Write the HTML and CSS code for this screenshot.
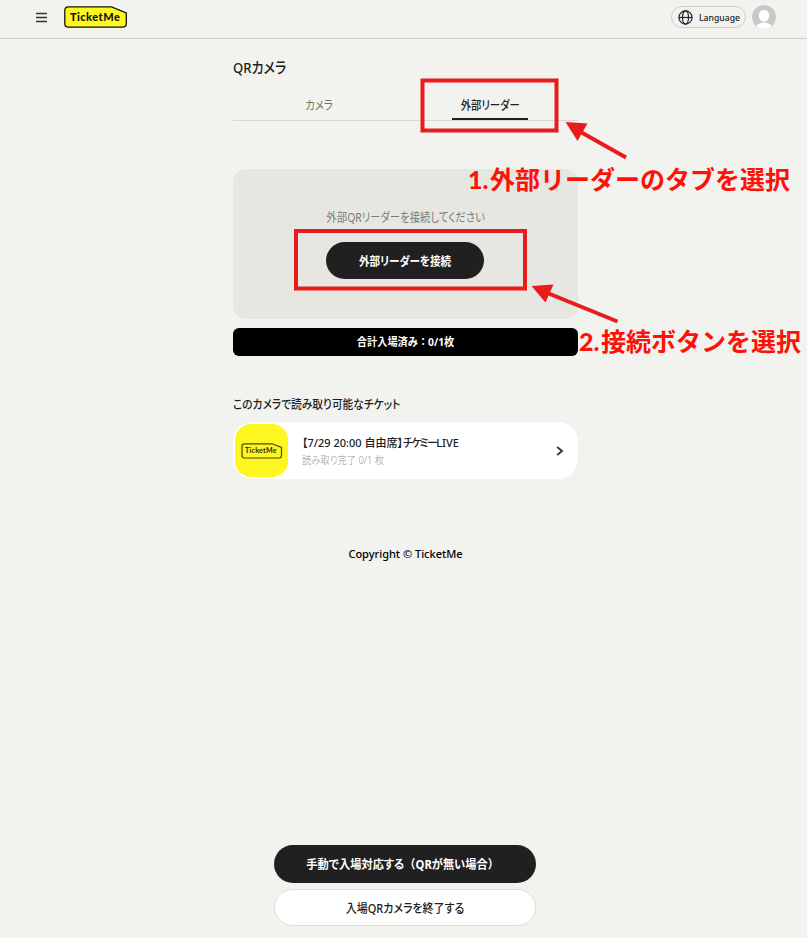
FILE: index.html
```
<!DOCTYPE html>
<html lang="ja">
<head>
<meta charset="utf-8">
<title>QRカメラ</title>
<link rel="stylesheet" href="styles.css">
</head>
<body>
<header class="header">
  <svg class="menu" width="12" height="11" viewBox="0 0 12 11"><path d="M0 1.500h11M0 5.500h11M0 9.500h11" stroke="#30313a" stroke-width="1.300"/></svg>
  <div class="logo">
    <svg width="64" height="22" viewBox="0 0 64 22"><path d="M4.500 .8H47.500L62.300 7V17.500Q62.300 21.200 58.500 21.200H4.500Q.8 21.200 .8 17.500V4.500Q.8 .8 4.500 .8Z" fill="#fdf620" stroke="#15150c" stroke-width="1.300"/></svg>
    <span class="logo-text">TicketMe</span>
  </div>
  <div class="language">
    <svg width="15" height="15" viewBox="0 0 15 15" fill="none" stroke="#1c2030" stroke-width="1.200"><circle cx="7.500" cy="7.500" r="6.600"/><ellipse cx="7.500" cy="7.500" rx="3" ry="6.600"/><path d="M1 7.500h13"/></svg>
    <span class="language-text">Language</span>
  </div>
  <svg class="avatar" width="24" height="24" viewBox="0 0 24 24"><defs><clipPath id="disc"><circle cx="12" cy="12" r="12"/></clipPath></defs><g clip-path="url(#disc)"><path fill="#c9c9c9" d="M0 0h24v24H0z"/><ellipse cx="12" cy="10.800" rx="5.200" ry="6" fill="#fff"/><path d="M3.500 24Q4.500 17.500 12 17.500T20.500 24Z" fill="#fff"/></g></svg>
</header>
<main class="main">
  <h1 class="title">QRカメラ</h1>
  <nav class="tabs">
    <div class="tab"><span class="tab-text">カメラ</span></div>
    <div class="tab tab-active"><div class="tab-reader"><span class="tab-text">外部リーダー</span></div></div>
  </nav>
  <section class="panel">
    <p class="panel-text">外部QRリーダーを接続してください</p>
    <button class="connect"><span>外部リーダーを接続</span></button>
  </section>
  <div class="total"><span>合計入場済み<span class="full">：</span>0/1枚</span></div>
  <h2 class="subtitle">このカメラで読み取り可能なチケット</h2>
  <article class="ticket">
    <div class="thumb">
      <svg width="42" height="16" viewBox="0 0 42 16"><path d="M3.500 .8H31L40.500 4.500V12.500Q40.500 15 38 15H3.500Q1 15 1 12.500V3.500Q1 .8 3.500 .8Z" fill="none" stroke="#4b4910" stroke-width="1.200"/></svg>
      <span class="thumb-text">TicketMe</span>
    </div>
    <div class="ticket-info">
      <div class="ticket-name">【7/29 20:00 自由席】<span class="ticket-kana">チケミー</span>LIVE</div>
      <div class="ticket-count">読み取り完了 0/1 枚</div>
    </div>
    <svg class="chevron" width="8" height="10" viewBox="0 0 8 10"><path d="M1.200 1L6 5L1.200 9" fill="none" stroke="#353535" stroke-width="1.900"/></svg>
  </article>
  <footer class="copyright">Copyright © TicketMe</footer>
</main>
<div class="actions">
  <button class="manual"><span>手動で入場対応する<span class="full">（</span>QRが無い場合<span class="full">）</span></span></button>
  <button class="finish"><span>入場QRカメラを終了する</span></button>
</div>
<svg class="marks" width="807" height="938" viewBox="0 0 807 938">
  <g fill="none" stroke="#e81c1c" stroke-width="4"><path d="M422.500 80.500H556.500V130.500H422.500Z"/><path d="M296 231H525V288.500H296Z"/><path d="M578 130.500L626 157.500M545 292L617.500 321.500"/></g>
  <path d="M565.500 122L587.500 123.500L577.500 141ZM531.500 286L553.500 284.500L545.500 302.500Z" fill="#e81c1c"/>
</svg>
<div class="note note-one"><span class="note-number">1.</span>外部リーダーのタブを選択</div>
<div class="note note-two"><span class="note-number">2.</span>接続ボタンを選択</div>
</body>
</html>
```
FILE: styles.css
```
* { box-sizing: border-box; }
body {
  margin: 0;
  height: 938px;
  position: relative;
  display: flex;
  flex-direction: column;
  overflow: hidden;
  background: #f2f3ee;
  color: #202020;
  font-family: "Noto Sans", "Noto Sans CJK JP", sans-serif;
  font-feature-settings: "palt";
  font-size: 12px;
  white-space: nowrap;
}
h1, h2, p { margin: 0; font-weight: 500; }
button { padding: 0; border: 0; font: inherit; font-feature-settings: inherit; }
svg { display: block; flex: none; }
.full { font-feature-settings: normal; }

.header { display: flex; align-items: center; height: 39px; padding: 0 31px 4px 36px; border-bottom: 1px solid #cfcfcc; }
.logo { position: relative; margin-left: 16px; }
.logo-text { position: absolute; left: 6px; top: 3px; color: #15150c; font: 900 11px/16px Lato, sans-serif; letter-spacing: .45px; }
.language { display: flex; align-items: center; gap: 6px; width: 75px; height: 22px; margin-left: auto; padding-left: 6px; border: 1px solid #cdd0c8; border-radius: 11px; }
.language-text { font-size: 9.500px; font-weight: 500; transform: scaleX(.91); transform-origin: left; }
.avatar { margin-left: 6px; }

.main { width: 345px; margin-left: 233px; }
.title { height: 28px; margin-top: 14px; font-size: 15px; line-height: 28px; transform: scaleX(.87); transform-origin: left; }
.tabs { display: flex; height: 39px; margin-top: 1px; border-bottom: 1px solid #d8d9d4; }
.tab { flex: 1; display: flex; justify-content: center; line-height: 48px; color: #70716c; }
.tab-active { padding-right: 2px; color: #202020; font-weight: 500; }
.tab-reader { display: flex; justify-content: center; width: 76px; height: 38px; border-bottom: 2px solid #1e211c; }
.tab-text { height: 37px; transform: scaleX(.86); }
.panel { display: flex; flex-direction: column; align-items: center; height: 150px; margin-top: 48px; padding-top: 39px; border-radius: 13px; background: #e6e7e1; }
.panel-text { height: 20px; line-height: 20px; color: #7b7b76; font-weight: 400; transform: scaleX(.865); }
.connect { width: 158px; height: 37px; margin: 14px 1px 0 0; border-radius: 19px; background: #202020; color: #fff; font-weight: 700; }
.connect span { display: block; transform: scaleX(.88); }
.total { height: 28px; margin-top: 9px; border-radius: 6px; background: #000; color: #fff; font-size: 11px; font-weight: 700; line-height: 28px; text-align: center; }
.total > span { display: block; transform: scaleX(.93); }
.subtitle { height: 20px; margin-top: 39px; font-size: 12px; line-height: 20px; transform: scaleX(.893); transform-origin: left; }
.ticket { display: flex; align-items: center; height: 57px; margin-top: 7px; padding: 0 14px 0 2px; border-radius: 20px; background: #fff; }
.thumb { position: relative; display: grid; place-items: center; width: 53px; height: 53px; border-radius: 16px; background: #fdf620; }
.thumb-text { position: absolute; left: 10px; top: 21px; color: #39370e; font: 900 7px/11px Lato, sans-serif; letter-spacing: .25px; }
.ticket-info { margin-left: 14px; }
.ticket-name { height: 20px; font-size: 11px; font-weight: 500; line-height: 20px; }
.ticket-kana { letter-spacing: -1.700px; }
.ticket-count { height: 16px; color: #949494; font-size: 10px; font-weight: 300; line-height: 14px; transform: scaleX(.93); transform-origin: left; }
.chevron { margin-left: auto; }
.copyright { height: 20px; margin-top: 65px; color: #000; font-size: 11px; font-weight: 500; line-height: 20px; text-align: center; }

.actions { display: flex; flex-direction: column; gap: 6px; width: 262px; margin: auto 0 12px 274px; }
.manual { height: 38px; border-radius: 19px; background: #202020; color: #fff; font-weight: 700; }
.manual > span { display: block; padding-right: 5px; transform: scaleX(.935); }
.finish { height: 37px; border: 1px solid #dddfd6; border-radius: 19px; background: #fff; color: #202020; font-weight: 500; }
.finish span { display: block; transform: scaleX(.915); }

.marks { position: absolute; left: 0; top: 0; }
.note { position: absolute; color: #ff1008; font-family: "Noto Sans CJK JP", sans-serif; font-feature-settings: normal; font-size: 25px; font-weight: 700; line-height: 36px; }
.note-number { display: inline-block; width: 22px; font-family: Lato, sans-serif; font-weight: 900; }
.note-one { left: 468px; top: 160px; }
.note-two { left: 579px; top: 322px; }
```
